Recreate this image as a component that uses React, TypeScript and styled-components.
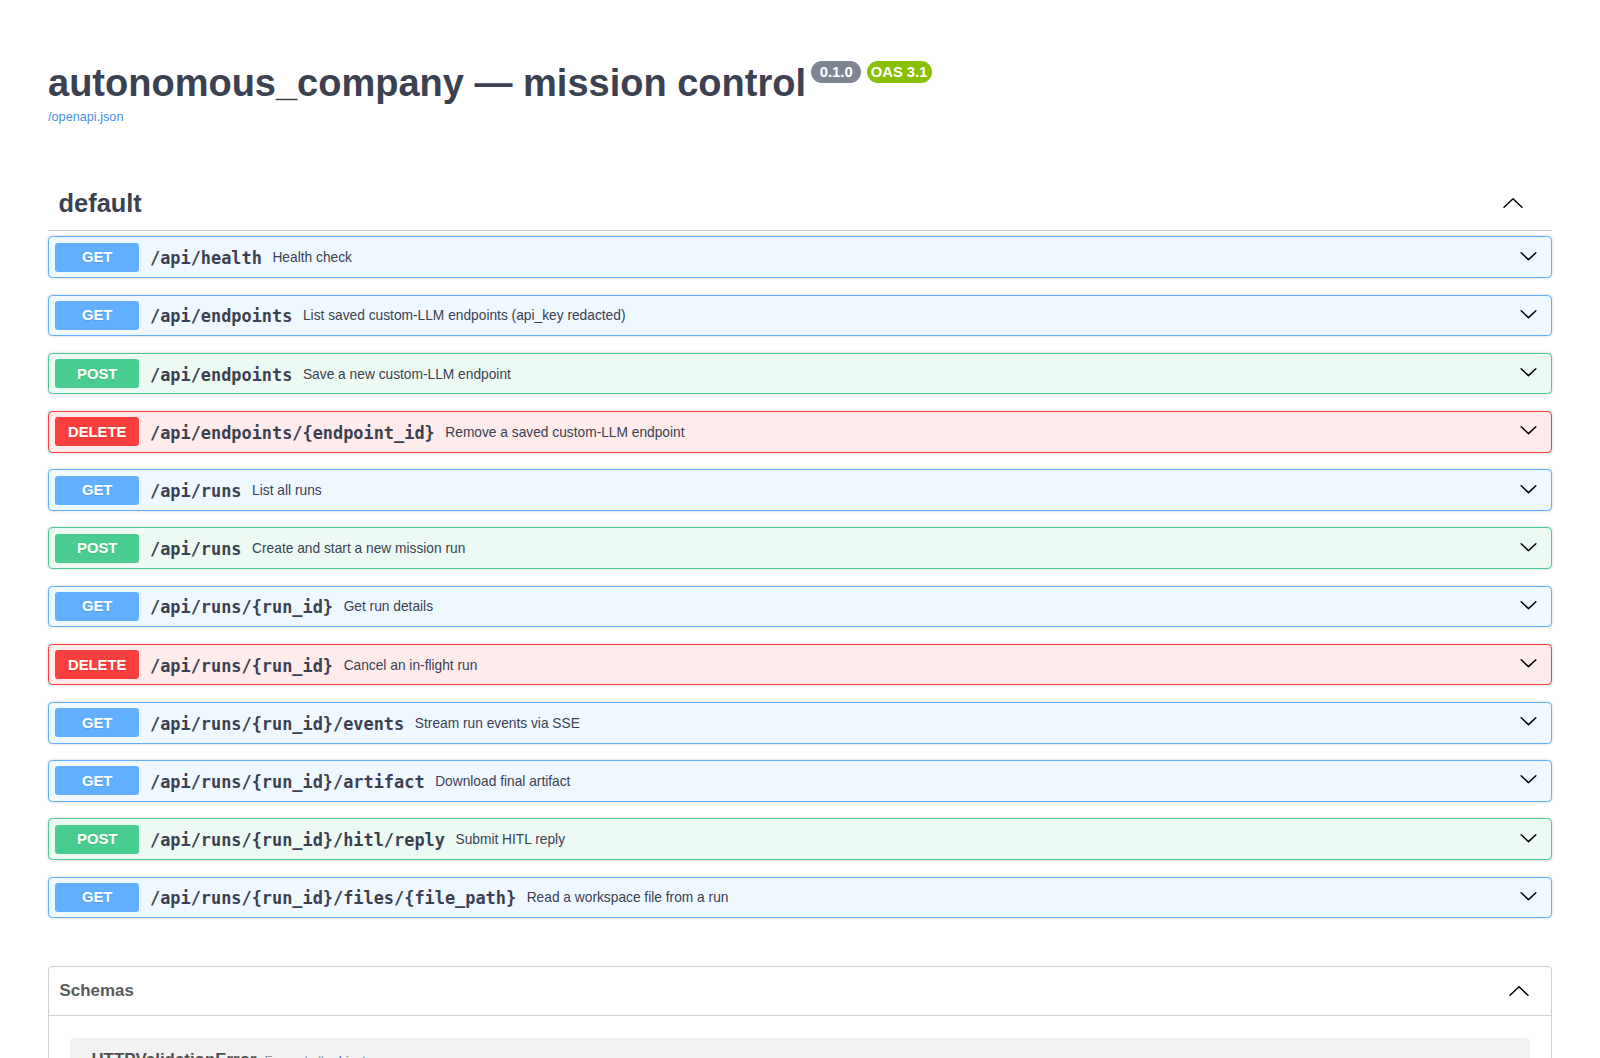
import React from "react";
import styled, { createGlobalStyle } from "styled-components";

const GlobalStyle = createGlobalStyle`
  html, body {
    margin: 0;
    padding: 0;
    background: #ffffff;
  }
  body {
    font-family: "Liberation Sans", Arial, Helvetica, sans-serif;
    color: #3b4151;
  }
  * { box-sizing: border-box; }
`;

type Method = "GET" | "POST" | "DELETE";

const methodColors: Record<Method, { solid: string; tint: string }> = {
  GET: { solid: "#61affe", tint: "#eff7ff" },
  POST: { solid: "#49cc90", tint: "#edfaf3" },
  DELETE: { solid: "#f93e3e", tint: "#feebeb" },
};

interface Operation {
  method: Method;
  path: string;
  summary: string;
}

const operations: Operation[] = [
  { method: "GET", path: "/api/health", summary: "Health check" },
  { method: "GET", path: "/api/endpoints", summary: "List saved custom-LLM endpoints (api_key redacted)" },
  { method: "POST", path: "/api/endpoints", summary: "Save a new custom-LLM endpoint" },
  { method: "DELETE", path: "/api/endpoints/{endpoint_id}", summary: "Remove a saved custom-LLM endpoint" },
  { method: "GET", path: "/api/runs", summary: "List all runs" },
  { method: "POST", path: "/api/runs", summary: "Create and start a new mission run" },
  { method: "GET", path: "/api/runs/{run_id}", summary: "Get run details" },
  { method: "DELETE", path: "/api/runs/{run_id}", summary: "Cancel an in-flight run" },
  { method: "GET", path: "/api/runs/{run_id}/events", summary: "Stream run events via SSE" },
  { method: "GET", path: "/api/runs/{run_id}/artifact", summary: "Download final artifact" },
  { method: "POST", path: "/api/runs/{run_id}/hitl/reply", summary: "Submit HITL reply" },
  { method: "GET", path: "/api/runs/{run_id}/files/{file_path}", summary: "Read a workspace file from a run" },
];

const Page = styled.div`
  max-width: 1504px;
  margin: 0 auto;
  padding-bottom: 60px;
`;

const Info = styled.div`
  padding-top: 61px;
  margin-bottom: 51px;
`;

const TitleRow = styled.div`
  display: flex;
  align-items: flex-start;
`;

const Title = styled.h2`
  margin: 0;
  font-size: 38px;
  line-height: 44px;
  font-weight: 700;
  color: #3b4151;
  white-space: nowrap;
`;

const VersionBadge = styled.span<{ $tone: string }>`
  display: inline-block;
  margin: 0 0 0 5.5px;
  padding: 2px 4.2px;
  border-radius: 60px;
  background: ${(p) => p.$tone};
  color: #ffffff;
  font-size: 14.8px;
  line-height: 18px;
  font-weight: 700;
  white-space: pre;
`;

const SpecLink = styled.a`
  display: block;
  margin-top: 5px;
  font-size: 12.7px;
  line-height: 14.6px;
  color: #4990e2;
  text-decoration: none;
`;

const TagHeader = styled.h3`
  display: flex;
  align-items: center;
  margin: 0 0 5.3px;
  padding: 10.6px 0 10.6px 10.6px;
  min-height: 55.6px;
  border-bottom: 1px solid #c8cacf;
  font-size: 25.4px;
  font-weight: 700;
  color: #3b4151;
`;

const TagName = styled.span`
  flex: 1;
  line-height: 30px;
`;

const HeaderToggle = styled.span<{ $right: number }>`
  display: flex;
  align-items: center;
  margin-right: ${(p) => p.$right}px;
  color: #000;
`;

const OpBlock = styled.div<{ $method: Method }>`
  display: flex;
  align-items: center;
  height: 41.6px;
  margin-bottom: 16.6px;
  padding: 0 6px;
  border: 1px solid ${(p) => methodColors[p.$method].solid};
  border-radius: 4.2px;
  background: ${(p) => methodColors[p.$method].tint};
  box-shadow: 0 0 3px rgba(0, 0, 0, 0.19);
`;

const MethodBadge = styled.span<{ $method: Method }>`
  flex: none;
  width: 84.4px;
  height: 29px;
  display: flex;
  align-items: center;
  justify-content: center;
  border-radius: 3.2px;
  background: ${(p) => methodColors[p.$method].solid};
  color: #ffffff;
  font-size: 14.8px;
  font-weight: 700;
  text-shadow: 0 1px 0 rgba(0, 0, 0, 0.1);
`;

const OpPath = styled.span`
  padding: 2px 10.6px 0;
  font-family: "DejaVu Sans Mono", "Liberation Mono", monospace;
  font-size: 16.9px;
  font-weight: 700;
  color: #3b4151;
  white-space: nowrap;
`;

const OpSummary = styled.span`
  flex: 1;
  padding-top: 1px;
  font-size: 13.75px;
  color: #3b4151;
  white-space: nowrap;
`;

const OpArrow = styled.span`
  display: flex;
  margin: 0 6px 2px 0;
  color: #000;
`;

const Models = styled.section`
  margin-top: 47.6px;
  border: 1px solid #cfd1d5;
  border-radius: 4.2px;
`;

const ModelsHeader = styled.h4`
  display: flex;
  align-items: center;
  height: 49px;
  margin: 0;
  padding: 0 0 0 10.6px;
  border-bottom: 1px solid #cfd1d5;
  font-size: 16.9px;
  font-weight: 700;
  color: #5a5a5a;
`;

const ModelsTitle = styled.span`
  flex: 1;
`;

const ModelsBody = styled.div`
  padding: 22px 21.2px 10px;
`;

const ModelContainer = styled.div`
  padding: 12px 21.2px 14px;
  margin-bottom: 16px;
  border-radius: 4.2px;
  background: #f2f2f2;
`;

const ModelTitleLine = styled.div`
  display: flex;
  align-items: baseline;
  gap: 8px;
  font-size: 16.9px;
  line-height: 19.5px;
`;

const ModelName = styled.span`
  font-weight: 700;
  color: #505050;
`;

const ModelHint = styled.span<{ $color: string }>`
  font-size: 12.7px;
  color: ${(p) => p.$color};
`;

const ChevronDown = () => (
  <svg width="21" height="21" viewBox="0 0 20 20" fill="none" aria-hidden="true">
    <polyline points="3,6.5 10,13 17,6.5" stroke="currentColor" strokeWidth="1.4" strokeLinecap="round" strokeLinejoin="round" />
  </svg>
);

const ChevronUp = () => (
  <svg width="24" height="24" viewBox="0 0 24 24" fill="none" aria-hidden="true">
    <polyline points="3,16.3 12,7.7 21,16.3" stroke="currentColor" strokeWidth="1.5" strokeLinecap="round" strokeLinejoin="round" />
  </svg>
);

export default function App() {
  return (
    <>
      <GlobalStyle />
      <Page>
        <Info>
          <TitleRow>
            <Title>autonomous_company — mission control</Title>
            <VersionBadge $tone="#7d8492">{" 0.1.0 "}</VersionBadge>
            <VersionBadge $tone="#89bf04">OAS 3.1</VersionBadge>
          </TitleRow>
          <SpecLink href="#">/openapi.json</SpecLink>
        </Info>

        <TagHeader>
          <TagName>default</TagName>
          <HeaderToggle $right={27}>
            <ChevronUp />
          </HeaderToggle>
        </TagHeader>

        {operations.map((op, i) => (
          <OpBlock key={i} $method={op.method}>
            <MethodBadge $method={op.method}>{op.method}</MethodBadge>
            <OpPath>{op.path}</OpPath>
            <OpSummary>{op.summary}</OpSummary>
            <OpArrow>
              <ChevronDown />
            </OpArrow>
          </OpBlock>
        ))}

        <Models>
          <ModelsHeader>
            <ModelsTitle>Schemas</ModelsTitle>
            <HeaderToggle $right={20.5}>
              <ChevronUp />
            </HeaderToggle>
          </ModelsHeader>
          <ModelsBody>
            <ModelContainer>
              <ModelTitleLine>
                <ModelName>HTTPValidationError</ModelName>
                <ModelHint $color="#9a9a9a">Expand all</ModelHint>
                <ModelHint $color="#55a">object</ModelHint>
              </ModelTitleLine>
            </ModelContainer>
            <ModelContainer>
              <ModelTitleLine>
                <ModelName>ValidationError</ModelName>
                <ModelHint $color="#9a9a9a">Expand all</ModelHint>
                <ModelHint $color="#55a">object</ModelHint>
              </ModelTitleLine>
            </ModelContainer>
          </ModelsBody>
        </Models>
      </Page>
    </>
  );
}
